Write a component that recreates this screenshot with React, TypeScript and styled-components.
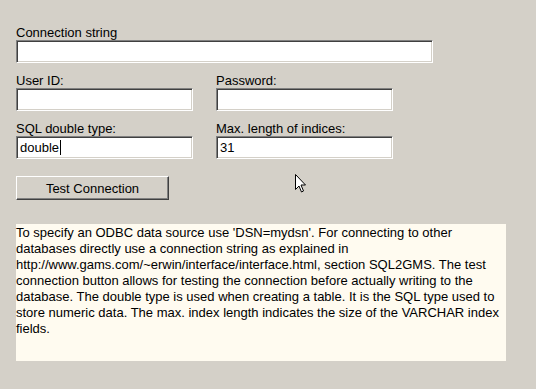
import React from 'react';
import styled, { createGlobalStyle } from 'styled-components';

const GlobalStyle = createGlobalStyle`
  html, body {
    margin: 0;
    padding: 0;
    background: #d4d0c8;
  }
  body {
    font-family: "Liberation Sans", Arial, sans-serif;
    font-size: 13px;
    color: #000;
  }
`;

const Page = styled.div`
  position: relative;
  width: 536px;
  height: 389px;
  padding: 24px 0 0 16px;
  box-sizing: border-box;
  overflow: hidden;
`;

const Row = styled.div`
  display: flex;
  gap: 23px;
  margin-bottom: 9px;
`;

const Field = styled.div<{ $width: number }>`
  display: flex;
  flex-direction: column;
  width: ${(p) => p.$width}px;
`;

const Label = styled.label`
  height: 16px;
  line-height: 17px;
  white-space: nowrap;
`;

const TextBox = styled.div`
  height: 23px;
  box-sizing: border-box;
  background: #fff;
  border-top: 1px solid #808080;
  border-left: 1px solid #808080;
  border-bottom: 1px solid #fff;
  border-right: 1px solid #fff;
  box-shadow: inset 1px 1px 0 #404040, inset -1px -1px 0 #d4d0c8;
  padding: 0 3px;
  display: flex;
  align-items: center;
  white-space: nowrap;
`;

const Caret = styled.span`
  display: inline-block;
  width: 1px;
  height: 15px;
  background: #000;
  margin-left: 1px;
`;

const Controls = styled.div`
  padding-top: 8px;
`;

const Button = styled.button`
  width: 153px;
  height: 24px;
  padding: 0;
  background: #d4d0c8;
  font-family: inherit;
  font-size: 13px;
  color: #000;
  border-top: 1px solid #fff;
  border-left: 1px solid #fff;
  border-bottom: 1px solid #404040;
  border-right: 1px solid #404040;
  box-shadow: inset -1px -1px 0 #808080;
  border-radius: 0;
  display: block;
`;

const Help = styled.div`
  margin-top: 24px;
  width: 490px;
  height: 137px;
  background: #fffbf0;
  line-height: 16px;
  padding-top: 1px;
  box-sizing: border-box;
`;

const HelpLine = styled.div`
  white-space: nowrap;
`;

const Pointer = styled.svg`
  position: absolute;
  left: 294px;
  top: 173px;
`;

const helpLines = [
  "To specify an ODBC data source use 'DSN=mydsn'. For connecting to other",
  'databases directly use a connection string as explained in',
  'http://www.gams.com/~erwin/interface/interface.html, section SQL2GMS. The test',
  'connection button allows for testing the connection before actually writing to the',
  'database. The double type is used when creating a table. It is the SQL type used to',
  'store numeric data. The max. index length indicates the size of the VARCHAR index',
  'fields.',
];

export default function App() {
  return (
    <Page>
      <GlobalStyle />
      <Row>
        <Field $width={417}>
          <Label>Connection string</Label>
          <TextBox />
        </Field>
      </Row>
      <Row>
        <Field $width={177}>
          <Label>User ID:</Label>
          <TextBox />
        </Field>
        <Field $width={177}>
          <Label>Password:</Label>
          <TextBox />
        </Field>
      </Row>
      <Row>
        <Field $width={177}>
          <Label>SQL double type:</Label>
          <TextBox>
            double
            <Caret />
          </TextBox>
        </Field>
        <Field $width={177}>
          <Label>Max. length of indices:</Label>
          <TextBox>31</TextBox>
        </Field>
      </Row>
      <Controls>
        <Button>Test Connection</Button>
      </Controls>
      <Help>
        {helpLines.map((l, i) => (
          <HelpLine key={i}>{l}</HelpLine>
        ))}
      </Help>
      <Pointer width="13" height="21" viewBox="0 0 13 21">
        <path
          d="M1.5 1.5 L1.5 16.5 L5 13 L7.5 19 L9.5 18 L7 12 L11.5 12 Z"
          fill="#fff"
          stroke="#000"
          strokeWidth="1"
        />
      </Pointer>
    </Page>
  );
}
